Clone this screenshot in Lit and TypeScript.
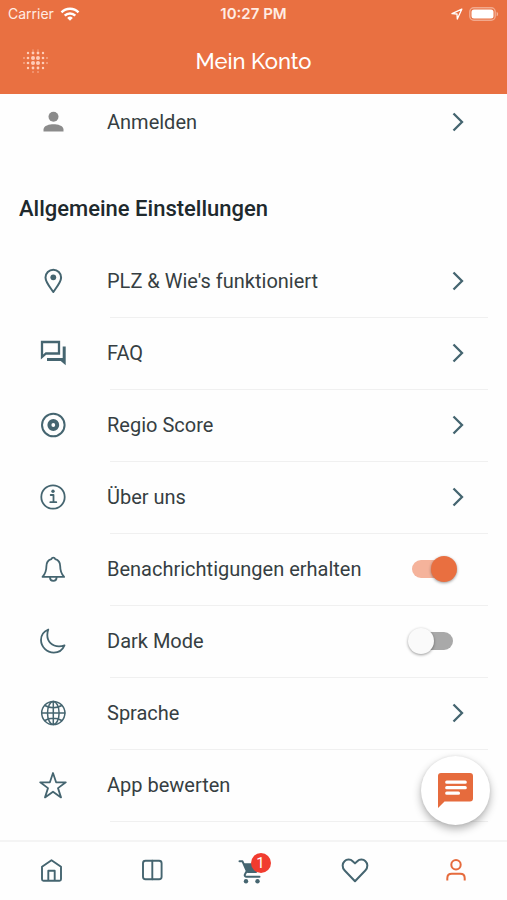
import { LitElement, html, css, svg, TemplateResult } from "lit";
import { customElement, property, state } from "lit/decorators.js";
import { classMap } from "lit/directives/class-map.js";

const line = (body: TemplateResult, width = 2, size = 28) => html`<svg
  width=${size} height=${size} viewBox="0 0 28 28" fill="none" stroke="currentColor"
  stroke-width=${width} stroke-linejoin="round" stroke-linecap="round" aria-hidden="true">${body}</svg>`;

const icons: Record<string, TemplateResult> = {
  account: line(svg`<g fill="currentColor" stroke="none"><circle cx="14.500" cy="8.800" r="5"/><path d="M4.500 23.500v-2c0-4 6-5.300 10-5.300s10 1.300 10 5.300v2z"/></g>`),
  pin: line(svg`<path d="M14.300 25c-2-3.200-7.800-9.500-7.800-14.500a7.800 7.800 0 0 1 15.600 0c0 5-5.800 11.300-7.800 14.500z"/><circle cx="14.300" cy="10.300" r="2.900" fill="currentColor" stroke="none"/>`),
  chat: line(svg`<path d="M3 3h17v11.500h-13l-4 3.500z" stroke-linejoin="miter" stroke-width="2.300"/><path d="M23.700 7.500h3v18.800l-5-4.300H8v-3h15.700z" fill="currentColor" stroke="none"/>`),
  record: line(svg`<circle cx="14.300" cy="14" r="11.300"/><circle cx="14.300" cy="14" r="3.900" stroke-width="4"/>`, 2),
  info: line(svg`<circle cx="14" cy="14" r="11.700" stroke-width="1.800"/><path d="M11.700 12h2.800v7M11.300 19.200h6"/><circle cx="14" cy="8.300" r="1.700" fill="currentColor" stroke="none"/>`, 1.8),
  bell: line(svg`<path d="M14.300 2.600c-.9 0-1.600.5-1.900 1.500C9 5 7.400 7.700 7.400 11.200c0 5.300-1 7.500-3.900 10.700h21.600c-2.900-3.200-3.900-5.400-3.900-10.700 0-3.500-1.600-6.200-5-7.100-.3-1-1-1.500-1.900-1.500z"/><path d="M11 22.500c0 4.500 6.600 4.500 6.600 0"/>`, 1.8),
  moon: line(svg`<path d="M9.300 2.500C4.500 4.500 2 8.400 2 13a13 12.800 0 0 0 12.800 12.600c4.800 0 8.700-2.600 10.700-7.300-2 .8-3.800 1-5.500 1C13 19.300 8.300 14.500 8.300 8c0-1.900.3-3.700 1-5.500z"/>`, 1.8),
  globe: line(svg`<circle cx="14.300" cy="14" r="11.600"/><ellipse cx="14.300" cy="14" rx="5.800" ry="11.600"/><path d="M14.300 2.400v23.200M2.700 14h23.200M5.800 6.500c5 3 12 3 17 0M5.800 21.500c5-3 12-3 17 0"/>`, 1.5),
  star: line(svg`<path d="M14 2l3.100 9.300h9.700l-7.800 5.800 3 9.300-8-5.700-8 5.700 3-9.300-7.800-5.800h9.700z"/>`, 1.8),
  home: line(svg`<path d="M5 10.800v12.400c0 .9.600 1.500 1.500 1.500h16c.9 0 1.500-.6 1.500-1.500V10.800L14.500 4.200zM11.300 24.500V14.800h6.400v9.700"/>`, 1.9),
  columns: line(svg`<rect x="5" y="4.700" width="18.600" height="18.600" rx="2.500"/><path d="M14.300 4.700v18.600"/>`, 1.9),
  cart: line(svg`<path d="M2.500 5.300h3l4.300 9.700-1.800 3.300c-.7 1.300.1 2.500 1.500 2.500h13" stroke-width="2"/><path d="M6.500 7.200h17l-3.300 8.800c-.3.800-.8 1-1.600 1H10.300z" fill="currentColor" stroke="none"/><circle cx="9" cy="25.300" r="2.200" fill="currentColor" stroke="none"/><circle cx="20.500" cy="25.300" r="2.200" fill="currentColor" stroke="none"/>`),
  heart: line(svg`<path d="M14 25.200L3.700 14.500C.8 11.500 1.200 7.400 3.500 5.200c2.300-2.300 6-2.200 8.200 0L14 7.400l2.300-2.200c2.200-2.200 5.900-2.300 8.200 0 2.300 2.200 2.700 6.300-.2 9.300z"/>`, 2),
  user: line(svg`<circle cx="14" cy="8.800" r="4.700"/><path d="M5.300 24.500v-2.300c0-3 1.800-4.400 4.500-4.400h8.400c2.700 0 4.500 1.400 4.500 4.400v2.300" stroke-linecap="butt"/>`, 2),
};

const wifi = html`<svg width="20" height="14" viewBox="0 0 20 14" fill="none" stroke="currentColor" stroke-width="2.500" aria-hidden="true">
  <path d="M1.500 5.300a12 12 0 0 1 17 0M4.700 8.600a7.500 7.500 0 0 1 10.600 0"/><path d="M10 13.800l-2.800-2.900a4 4 0 0 1 5.600 0z" fill="currentColor" stroke="none"/></svg>`;

const locate = html`<svg width="12" height="12" viewBox="0 0 12 12" fill="none" stroke="currentColor" stroke-width="1.300" stroke-linejoin="round" aria-hidden="true">
  <path d="M10.800 1.200L1 5.700l5 .3.300 5z"/></svg>`;

const battery = html`<svg width="30" height="14" viewBox="0 0 30 14" aria-hidden="true">
  <rect x=".8" y=".8" width="25.400" height="12.400" rx="4" fill="none" stroke="#fff" stroke-opacity=".4" stroke-width="1.400"/>
  <rect x="2.500" y="2.500" width="22" height="9" rx="2.500" fill="#fff"/><path d="M27.600 4.700c2 .8 2 3.800 0 4.600z" fill="#fff" opacity=".45"/></svg>`;

const dotRows: [number, number, number][] = [
  [1, 10, 0.6], [1, 15, 0.6],
  [4, 5, 1.2], [4, 10, 1.4], [4, 15, 1.4], [4, 20, 1.2],
  [9, 1, 0.8], [9, 5, 1.3], [9, 10, 2], [9, 15, 2], [9, 20, 1.3], [9, 24, 0.8],
  [14, 1, 0.8], [14, 5, 1.3], [14, 10, 2], [14, 15, 2], [14, 20, 1.3], [14, 24, 0.8],
  [19, 5, 1.2], [19, 10, 1.4], [19, 15, 1.4], [19, 20, 1.2],
  [23, 10, 0.7], [23, 15, 0.7],
];
const logo = html`<svg width="26" height="25" viewBox="0 0 26 25" fill="currentColor" aria-hidden="true">
  ${dotRows.map(([y, x, r]) => svg`<circle cx=${x} cy=${y} r=${r}/>`)}</svg>`;

const chevron = html`<svg width="14" height="20" viewBox="0 0 14 20" fill="none" stroke="currentColor" stroke-width="2.300" aria-hidden="true">
  <path d="M2.500 1.500L11 10l-8.500 8.500"/></svg>`;

@customElement("settings-row")
export class SettingsRow extends LitElement {
  @property() icon = "";
  @property() label = "";
  @property() kind: "link" | "plain" | "switch" = "link";
  @property({ type: Boolean }) checked = false;
  @property({ type: Boolean }) muted = false;

  static styles = css`
    :host { display: block; }
    .row {
      display: grid;
      grid-template-columns: 28px 1fr auto;
      column-gap: 40px;
      align-items: center;
      box-sizing: border-box;
      width: 100%;
      height: 100%;
      padding: 0 42px 3px 39px;
      color: #456570;
      text-decoration: none;
      font: 20px/24px Roboto, sans-serif;
    }
    .switchable { padding-right: 50px; }
    svg { display: block; }
    .muted { color: #8b8b8b; }
    .label { color: #363e42; white-space: nowrap; }
    .switch {
      appearance: none;
      position: relative;
      width: 49px;
      height: 26px;
      margin: 0;
      cursor: pointer;
    }
    .switch::before {
      content: "";
      position: absolute;
      inset: 4px;
      border-radius: 9px;
      background: #a9a9a9;
    }
    .switch::after {
      content: "";
      position: absolute;
      left: 0;
      top: 0;
      width: 26px;
      height: 26px;
      border-radius: 50%;
      background: #fafafa;
      box-shadow: 0 1px 3px rgba(0, 0, 0, 0.4);
    }
    .switch:checked::before { background: #f5b39b; }
    .switch:checked::after { left: auto; right: 0; background: #e96f40; }
  `;

  render() {
    const glyph = html`<span class=${classMap({ muted: this.muted })}>${icons[this.icon]}</span>`;
    if (this.kind === "switch") {
      return html`<label class="row switchable">${glyph}<span class="label">${this.label}</span>
        <input class="switch" type="checkbox" role="switch" .checked=${this.checked} /></label>`;
    }
    return html`<a class="row" href="#">${glyph}<span class="label">${this.label}</span>
      ${this.kind === "link" ? chevron : ""}</a>`;
  }
}

@customElement("app-root")
export class AppRoot extends LitElement {
  @state() private cartCount = 1;

  private rows = [
    { icon: "pin", label: "PLZ & Wie's funktioniert", kind: "link" },
    { icon: "chat", label: "FAQ", kind: "link" },
    { icon: "record", label: "Regio Score", kind: "link" },
    { icon: "info", label: "Über uns", kind: "link" },
    { icon: "bell", label: "Benachrichtigungen erhalten", kind: "switch", checked: true },
    { icon: "moon", label: "Dark Mode", kind: "switch" },
    { icon: "globe", label: "Sprache", kind: "link" },
    { icon: "star", label: "App bewerten", kind: "plain" },
  ];

  private tabs = [
    { icon: "home", label: "Start" },
    { icon: "columns", label: "Magazin" },
    { icon: "cart", label: "Warenkorb" },
    { icon: "heart", label: "Favoriten" },
    { icon: "user", label: "Mein Konto", active: true },
  ];

  static styles = css`
    :host {
      display: flex;
      flex-direction: column;
      height: 100vh;
      position: relative;
      overflow: hidden;
      background: #fefefe;
      font-family: Roboto, sans-serif;
    }
    svg { display: block; }
    .top { flex: none; background: #e97041; color: #fff; }
    .status {
      display: grid;
      grid-template-columns: minmax(0, 1fr) auto minmax(0, 1fr);
      align-items: center;
      height: 28px;
      padding: 0 8px;
      font: 14px/20px Inter, sans-serif;
      color: #ffece4;
    }
    .side { display: flex; align-items: center; gap: 6px; }
    .end { justify-content: flex-end; }
    .side svg { color: #fff; }
    .time { font-size: 15px; font-weight: 600; }
    .bar {
      display: grid;
      grid-template-columns: 1fr auto 1fr;
      align-items: center;
      height: 66px;
      padding: 0 23px;
    }
    .logo { padding: 0; border: 0; background: none; color: #ffcdb9; justify-self: start; }
    .title { margin: 0; font: 500 22px/28px Raleway, Inter, sans-serif; }
    .content { flex: 1; min-height: 0; overflow: hidden; }
    .login { height: 58px; }
    .heading {
      margin: 0;
      padding: 43px 19px 23px;
      font: 500 22px/28px Roboto, sans-serif;
      color: #20292d;
    }
    .list { list-style: none; margin: 0; padding: 0; }
    .item { display: grid; height: 72px; position: relative; }
    .item::after {
      content: "";
      position: absolute;
      left: 110px;
      right: 19px;
      bottom: 0;
      height: 1px;
      background: #f0f0f0;
    }
    .fab {
      position: absolute;
      right: 17px;
      bottom: 75px;
      display: grid;
      place-items: center;
      width: 69px;
      height: 69px;
      padding: 0;
      border: 0;
      border-radius: 50%;
      background: #fff;
      color: #e66b3d;
      box-shadow: 0 4px 9px rgba(0, 0, 0, 0.3), 0 0 3px rgba(0, 0, 0, 0.08);
    }
    .nav {
      flex: none;
      display: flex;
      height: 58px;
      border-top: 2px solid #f4f4f4;
      background: #fefefe;
    }
    .tab { flex: 1; display: grid; place-items: center; padding-bottom: 2px; color: #456570; }
    .active { color: #e66b3d; }
    .holder { position: relative; }
    .badged { padding-right: 6px; }
    .badge {
      position: absolute;
      right: 0;
      top: -3px;
      width: 20px;
      border-radius: 10px;
      background: #f13c2f;
      color: #fff;
      font-size: 15px;
      line-height: 20px;
      text-align: center;
    }
  `;

  render() {
    return html`
      <header class="top">
        <div class="status">
          <div class="side"><span>Carrier</span>${wifi}</div>
          <span class="time">10:27 PM</span>
          <div class="side end">${locate}${battery}</div>
        </div>
        <div class="bar">
          <button class="logo" aria-label="Menü">${logo}</button>
          <h1 class="title">Mein Konto</h1>
        </div>
      </header>
      <main class="content">
        <settings-row class="login" icon="account" label="Anmelden" muted></settings-row>
        <h2 class="heading">Allgemeine Einstellungen</h2>
        <ul class="list">
          ${this.rows.map((r) => html`<li class="item">
            <settings-row icon=${r.icon} label=${r.label} kind=${r.kind} ?checked=${r.checked}></settings-row>
          </li>`)}
        </ul>
      </main>
      <button class="fab" aria-label="Chat">
        <svg width="38" height="38" viewBox="0 0 38 38" aria-hidden="true">
          <path d="M4 1h29a3 3 0 0 1 3 3v22.500a3 3 0 0 1-3 3H7.500L1 36V4a3 3 0 0 1 3-3z" fill="currentColor"/>
          <path d="M9.800 10.200h18.400M9.800 15.700h18.400M9.800 21.200h11.600" stroke="#fff" stroke-width="3.300" stroke-linecap="round"/>
        </svg>
      </button>
      <nav class="nav">
        ${this.tabs.map((t) => html`<a href="#" aria-label=${t.label} class=${classMap({ tab: true, active: !!t.active })}>
          <span class=${classMap({ holder: true, badged: t.icon === "cart" })}>${icons[t.icon]}${t.icon === "cart" ? html`<span class="badge">${this.cartCount}</span>` : ""}</span>
        </a>`)}
      </nav>
    `;
  }
}
